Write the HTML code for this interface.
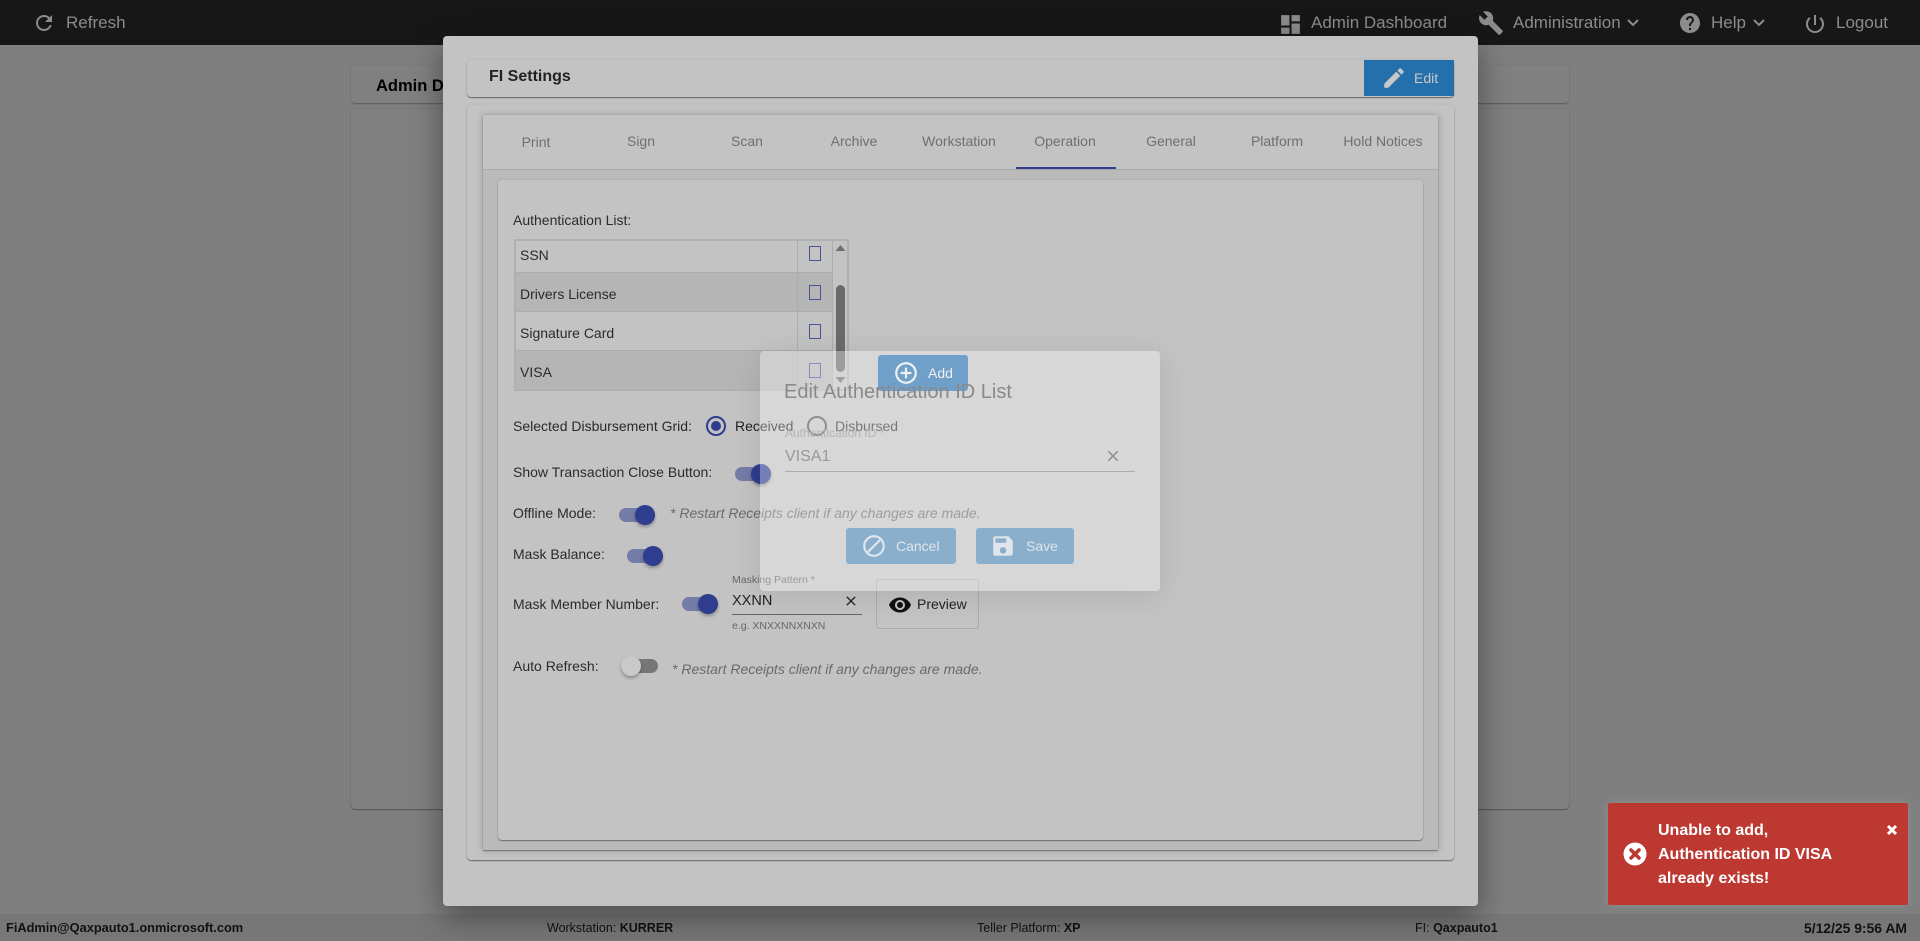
<!DOCTYPE html>
<html lang="en"><head><meta charset="utf-8"><title>FI Settings</title>
<style>
html,body{margin:0;padding:0;width:1920px;height:941px;overflow:hidden;background:#7f7f7f;font-family:"Liberation Sans",Arial,sans-serif}
#r div,#r svg,#r span.t{position:absolute}
.t{position:absolute;white-space:nowrap;line-height:18px;height:18px;font-size:14px;color:#2b2b2b}
.h{font-size:17px;color:#8c8c8c;top:14px}
.tab{font-size:14px;color:#6f6f6f;top:132px;width:106px;text-align:center;}
.n{font-style:italic;color:#6a6a6a;font-size:14px}
.f{font-size:12.5px;color:#111;top:919px}
.f b{font-weight:700}
.cb{width:10px;height:13px;border:1px solid #46549c;left:809px}
.tr{width:36px;height:14px;border-radius:7px;background:#747ca8}
.kn{width:20px;height:20px;border-radius:50%;background:#2f3d8f;box-shadow:0 2px 3px rgba(0,0,0,.3)}
svg.i{display:block}
</style></head><body><div id="r">
<div style="left:0;top:0;width:1920px;height:45px;background:#171717"></div>
<svg class="i" style="left:32px;top:11px" width="24" height="24" viewBox="0 0 24 24" fill="#8c8c8c"><path d="M17.65 6.35C16.2 4.9 14.21 4 12 4c-4.42 0-7.99 3.58-7.99 8s3.57 8 7.99 8c3.73 0 6.84-2.55 7.73-6h-2.08c-.82 2.33-3.04 4-5.65 4-3.31 0-6-2.69-6-6s2.69-6 6-6c1.66 0 3.14.69 4.22 1.78L13 11h7V4l-2.35 2.35z"/></svg>
<span class="t h" style="left:66px">Refresh</span>
<svg class="i" style="left:1278px;top:12px" width="25" height="25" viewBox="0 0 24 24" fill="#8c8c8c"><path d="M13 3v6h8V3h-8zM3 13h8V3H3v10zm0 8h8v-6H3v6zm10 0h8V11h-8v10z"/></svg>
<span class="t h" style="left:1311px">Admin Dashboard</span>
<svg class="i" style="left:1478px;top:10px" width="26" height="26" viewBox="0 0 24 24" fill="#8c8c8c"><path d="M22.7 19l-9.1-9.1c.9-2.3.4-5-1.5-6.9-2-2-5-2.4-7.4-1.3L9 6 6 9 1.6 4.7C.4 7.1.9 10.1 2.9 12.1c1.9 1.9 4.6 2.4 6.9 1.5l9.1 9.1c.4.4 1 .4 1.4 0l2.3-2.3c.5-.4.5-1.1.1-1.4z"/></svg>
<span class="t h" style="left:1513px">Administration</span>
<svg class="i" style="left:1626px;top:17px" width="14" height="12" viewBox="0 0 14 12" fill="none" stroke="#8c8c8c" stroke-width="2"><path d="M2 3l5 5 5-5"/></svg>
<svg class="i" style="left:1678px;top:11px" width="24" height="24" viewBox="0 0 24 24" fill="#8c8c8c"><path d="M12 2C6.48 2 2 6.48 2 12s4.48 10 10 10 10-4.48 10-10S17.52 2 12 2zm1 17h-2v-2h2v2zm2.07-7.75l-.9.92C13.45 12.9 13 13.5 13 15h-2v-.5c0-1.1.45-2.1 1.17-2.83l1.24-1.26c.37-.36.59-.86.59-1.41 0-1.1-.9-2-2-2s-2 .9-2 2H8c0-2.21 1.79-4 4-4s4 1.79 4 4c0 .88-.36 1.68-.93 2.25z"/></svg>
<span class="t h" style="left:1711px">Help</span>
<svg class="i" style="left:1752px;top:17px" width="14" height="12" viewBox="0 0 14 12" fill="none" stroke="#8c8c8c" stroke-width="2"><path d="M2 3l5 5 5-5"/></svg>
<svg class="i" style="left:1803px;top:12px" width="24" height="24" viewBox="0 0 24 24" fill="#8c8c8c"><path d="M13 3h-2v10h2V3zm4.83 2.17l-1.42 1.42C17.99 7.86 19 9.81 19 12c0 3.87-3.13 7-7 7s-7-3.13-7-7c0-2.19 1.01-4.14 2.58-5.42L6.17 5.17C4.23 6.82 3 9.26 3 12c0 4.97 4.03 9 9 9s9-4.03 9-9c0-2.74-1.23-5.18-3.17-6.83z"/></svg>
<span class="t h" style="left:1836px">Logout</span>

<div style="left:351px;top:65px;width:1218px;height:38px;background:#808080;border-radius:4px;box-shadow:0 1px 1px rgba(0,0,0,.25),0 0 2px rgba(0,0,0,.1)"></div>
<div style="left:351px;top:109px;width:1218px;height:700px;background:#808080;border-radius:4px;box-shadow:0 1px 1px rgba(0,0,0,.3),0 0 2px rgba(0,0,0,.1)"></div>
<span class="t" style="left:376px;top:77px;font-weight:700;font-size:16.5px;color:#000">Admin Dashboard</span>

<div style="left:0;top:914px;width:1920px;height:27px;background:#777"></div>
<span class="t f" style="left:6px;font-size:12.8px"><b>FiAdmin@Qaxpauto1.onmicrosoft.com</b></span>
<span class="t f" style="left:547px">Workstation: <b>KURRER</b></span>
<span class="t f" style="left:977px">Teller Platform: <b>XP</b></span>
<span class="t f" style="left:1415px">FI: <b>Qaxpauto1</b></span>
<span class="t f" style="left:1804px;font-size:13.9px"><b>5/12/25 9:56 AM</b></span>

<!-- modal -->
<div style="left:443px;top:36px;width:1035px;height:870px;background:#c3c3c3;border-radius:4px;box-shadow:0 10px 32px rgba(0,0,0,.42)"></div>
<div style="left:467px;top:60px;width:987px;height:37px;background:#c3c3c3;border-radius:4px;box-shadow:0 1px 1px rgba(0,0,0,.45),0 0 3px rgba(0,0,0,.08)"></div>
<span class="t" style="left:489px;top:68px;font-weight:700;font-size:16px;color:#222">FI Settings</span>
<div style="left:1364px;top:60px;width:90px;height:36px;background:#2470ad"></div>
<svg class="i" style="left:1381px;top:65px" width="26" height="26" viewBox="0 0 24 24" fill="#c8c8c8"><path d="M3 17.25V21h3.75L17.81 9.94l-3.75-3.75L3 17.25zM20.71 7.04c.39-.39.39-1.02 0-1.41l-2.34-2.34c-.39-.39-1.02-.39-1.41 0l-1.83 1.83 3.75 3.75 1.83-1.83z"/></svg>
<span class="t" style="left:1414px;top:69px;color:#c8c8c8;font-size:14px">Edit</span>

<div style="left:467px;top:105px;width:987px;height:755px;background:#c3c3c3;border-radius:4px;box-shadow:0 1px 1px rgba(0,0,0,.45),0 0 3px rgba(0,0,0,.08)"></div>
<div style="left:483px;top:115px;width:955px;height:735px;background:#bababa;box-shadow:0 1px 1px rgba(0,0,0,.35),0 0 6px rgba(0,0,0,.25)"></div>
<div style="left:483px;top:115px;width:955px;height:55px;background:#c3c3c3;border-bottom:1px solid #a8a8a8;box-sizing:border-box"></div>
<span class="t tab" style="left:483px;top:133px">Print</span>
<span class="t tab" style="left:588px">Sign</span>
<span class="t tab" style="left:694px">Scan</span>
<span class="t tab" style="left:801px">Archive</span>
<span class="t tab" style="left:906px">Workstation</span>
<span class="t tab" style="left:1012px">Operation</span>
<span class="t tab" style="left:1118px">General</span>
<span class="t tab" style="left:1224px">Platform</span>
<span class="t tab" style="left:1330px">Hold Notices</span>
<div style="left:1016px;top:167px;width:100px;height:2px;background:#2f3d8f"></div>
<div style="left:498px;top:180px;width:925px;height:660px;background:#c3c3c3;border-radius:4px;box-shadow:0 1px 1px rgba(0,0,0,.4),0 0 2px rgba(0,0,0,.1)"></div>

<span class="t" style="left:513px;top:211px">Authentication List:</span>
<div style="left:514px;top:239px;width:335px;height:152px;border:2px solid #aeb1b3;box-sizing:border-box;background:#c3c3c3"></div>
<div style="left:516px;top:272px;width:316px;height:39px;background:#b5b5b5"></div>
<div style="left:516px;top:350px;width:316px;height:39px;background:#b5b5b5"></div>
<div style="left:516px;top:272px;width:316px;height:1px;background:#a9adb0"></div>
<div style="left:516px;top:311px;width:316px;height:1px;background:#a9adb0"></div>
<div style="left:516px;top:350px;width:316px;height:1px;background:#a9adb0"></div>
<div style="left:797px;top:241px;width:1px;height:148px;background:#a9adb0"></div>
<div style="left:832px;top:241px;width:1px;height:148px;background:#a9adb0"></div>
<span class="t" style="left:520px;top:246px">SSN</span>
<span class="t" style="left:520px;top:285px">Drivers License</span>
<span class="t" style="left:520px;top:324px">Signature Card</span>
<span class="t" style="left:520px;top:363px">VISA</span>
<div class="cb" style="top:246px"></div>
<div class="cb" style="top:285px"></div>
<div class="cb" style="top:324px"></div>
<div class="cb" style="top:363px"></div>
<svg class="i" style="left:835px;top:245px" width="11" height="7" viewBox="0 0 11 7" fill="#6e6e6e"><path d="M5.500 0L10.500 6H.5z"/></svg>
<div style="left:836px;top:285px;width:9px;height:87px;background:#6a6a6a;border-radius:5px"></div>
<svg class="i" style="left:835px;top:377px" width="11" height="7" viewBox="0 0 11 7" fill="#6e6e6e"><path d="M5.500 6L10.500 0H.5z"/></svg>

<div style="left:878px;top:355px;width:90px;height:36px;background:#2470ad;border-radius:3px"></div>
<svg class="i" style="left:893px;top:360px" width="26" height="26" viewBox="0 0 24 24" fill="#e8e8e8"><path d="M13 7h-2v4H7v2h4v4h2v-4h4v-2h-4V7zm-1-5C6.480 2 2 6.480 2 12s4.480 10 10 10 10-4.480 10-10S17.520 2 12 2zm0 18c-4.410 0-8-3.590-8-8s3.590-8 8-8 8 3.590 8 8-3.590 8-8 8z"/></svg>
<span class="t" style="left:928px;top:364px;color:#e8e8e8">Add</span>

<span class="t" style="left:513px;top:417px">Selected Disbursement Grid:</span>
<div style="left:706px;top:416px;width:20px;height:20px;border:2px solid #2f3d8f;border-radius:50%;box-sizing:border-box"></div>
<div style="left:711px;top:421px;width:10px;height:10px;border-radius:50%;background:#2f3d8f"></div>
<span class="t" style="left:735px;top:417px;color:#222">Received</span>
<div style="left:807px;top:416px;width:20px;height:20px;border:2px solid #555;border-radius:50%;box-sizing:border-box"></div>
<span class="t" style="left:835px;top:417px;color:#333">Disbursed</span>

<span class="t" style="left:513px;top:463px">Show Transaction Close Button:</span>
<div class="tr" style="left:735px;top:467px"></div><div class="kn" style="left:751px;top:464px"></div>
<span class="t" style="left:513px;top:504px">Offline Mode:</span>
<div class="tr" style="left:619px;top:508px"></div><div class="kn" style="left:635px;top:505px"></div>
<span class="t n" style="left:670px;top:504px">* Restart Receipts client if any changes are made.</span>
<span class="t" style="left:513px;top:545px">Mask Balance:</span>
<div class="tr" style="left:627px;top:549px"></div><div class="kn" style="left:643px;top:546px"></div>
<span class="t" style="left:513px;top:595px">Mask Member Number:</span>
<div class="tr" style="left:682px;top:597px"></div><div class="kn" style="left:698px;top:594px"></div>
<span class="t" style="left:732px;top:571px;font-size:10.5px;color:#666">Masking Pattern *</span>
<span class="t" style="left:732px;top:592px;font-size:14.5px;color:#222">XXNN</span>
<svg class="i" style="left:843px;top:593px" width="16" height="16" viewBox="0 0 24 24" fill="#222"><path d="M19 6.410L17.590 5 12 10.590 6.410 5 5 6.410 10.590 12 5 17.590 6.410 19 12 13.410 17.590 19 19 17.590 13.410 12z"/></svg>
<div style="left:732px;top:614px;width:130px;height:1px;background:#666"></div>
<span class="t" style="left:732px;top:617px;font-size:10.5px;color:#666">e.g. XNXXNNXNXN</span>
<div style="left:876px;top:579px;width:103px;height:50px;border:1px solid #ababab;border-radius:3px;box-sizing:border-box"></div>
<svg class="i" style="left:888px;top:593px" width="24" height="24" viewBox="0 0 24 24" fill="#111"><path d="M12 4.500C7 4.500 2.730 7.610 1 12c1.730 4.390 6 7.500 11 7.500s9.270-3.110 11-7.500c-1.730-4.390-6-7.500-11-7.500zM12 17c-2.760 0-5-2.240-5-5s2.240-5 5-5 5 2.240 5 5-2.240 5-5 5zm0-8c-1.660 0-3 1.340-3 3s1.340 3 3 3 3-1.340 3-3-1.340-3-3-3z"/></svg>
<span class="t" style="left:917px;top:595px;color:#222">Preview</span>
<span class="t" style="left:513px;top:657px">Auto Refresh:</span>
<div class="tr" style="left:622px;top:659px;background:#777"></div>
<div class="kn" style="left:621px;top:656px;background:#c9c9c9"></div>
<span class="t n" style="left:672px;top:660px">* Restart Receipts client if any changes are made.</span>

<!-- dialog -->
<div style="left:760px;top:351px;width:400px;height:240px;background:rgba(255,255,255,.34);border-radius:4px;box-shadow:0 4px 30px rgba(0,0,0,.1)"></div>
<span class="t" style="left:784px;top:382px;font-size:20px;line-height:20px;height:20px;color:#8a8a8a">Edit Authentication ID List</span>
<span class="t" style="left:785px;top:424px;font-size:12px;color:#b4b4b4">Authentication ID *</span>
<span class="t" style="left:785px;top:448px;font-size:16px;color:#999">VISA1</span>
<svg class="i" style="left:1104px;top:447px" width="18" height="18" viewBox="0 0 24 24" fill="#8e8e8e"><path d="M19 6.410L17.590 5 12 10.590 6.410 5 5 6.410 10.590 12 5 17.590 6.410 19 12 13.410 17.590 19 19 17.590 13.410 12z"/></svg>
<div style="left:785px;top:471px;width:350px;height:1px;background:#adadad"></div>
<div style="left:846px;top:528px;width:110px;height:36px;background:#8aafcd;border-radius:3px"></div>
<svg class="i" style="left:861px;top:533px" width="26" height="26" viewBox="0 0 24 24" fill="#dfe5ea"><path d="M12 2C6.480 2 2 6.480 2 12s4.480 10 10 10 10-4.480 10-10S17.520 2 12 2zM4 12c0-4.420 3.580-8 8-8 1.850 0 3.550.630 4.900 1.690L5.690 16.900C4.630 15.550 4 13.850 4 12zm8 8c-1.850 0-3.550-.630-4.900-1.690L18.310 7.100C19.370 8.450 20 10.150 20 12c0 4.420-3.580 8-8 8z"/></svg>
<span class="t" style="left:896px;top:537px;color:#dfe5ea">Cancel</span>
<div style="left:976px;top:528px;width:98px;height:36px;background:#8aafcd;border-radius:3px"></div>
<svg class="i" style="left:990px;top:533px" width="26" height="26" viewBox="0 0 24 24" fill="#dfe5ea"><path d="M17 3H5c-1.110 0-2 .900-2 2v14c0 1.100.890 2 2 2h14c1.100 0 2-.900 2-2V7l-4-4zm-5 16c-1.660 0-3-1.340-3-3s1.340-3 3-3 3 1.340 3 3-1.340 3-3 3zm3-10H5V5h10v4z"/></svg>
<span class="t" style="left:1026px;top:537px;color:#dfe5ea">Save</span>

<!-- toast -->
<div style="left:1608px;top:803px;width:300px;height:102px;background:#bc3831;border-radius:2px;box-shadow:0 0 8px rgba(255,255,255,.15)"></div>
<svg class="i" style="left:1623px;top:842px" width="24" height="24" viewBox="0 0 24 24"><circle cx="12" cy="12" r="11.500" fill="#fff"/><path d="M8 8l8 8M16 8l-8 8" stroke="#bc3831" stroke-width="3.500" stroke-linecap="round"/></svg>
<span class="t" style="left:1658px;top:822px;font-size:16px;font-weight:700;color:#fff">Unable to add,</span>
<span class="t" style="left:1658px;top:846px;font-size:16px;font-weight:700;color:#fff">Authentication ID VISA</span>
<span class="t" style="left:1658px;top:870px;font-size:16px;font-weight:700;color:#fff">already exists!</span>
<svg class="i" style="left:1886px;top:824px" width="12" height="12" viewBox="0 0 12 12"><path d="M2 2l8 8M10 2l-8 8" stroke="#fff" stroke-width="3"/></svg>
</div></body></html>
